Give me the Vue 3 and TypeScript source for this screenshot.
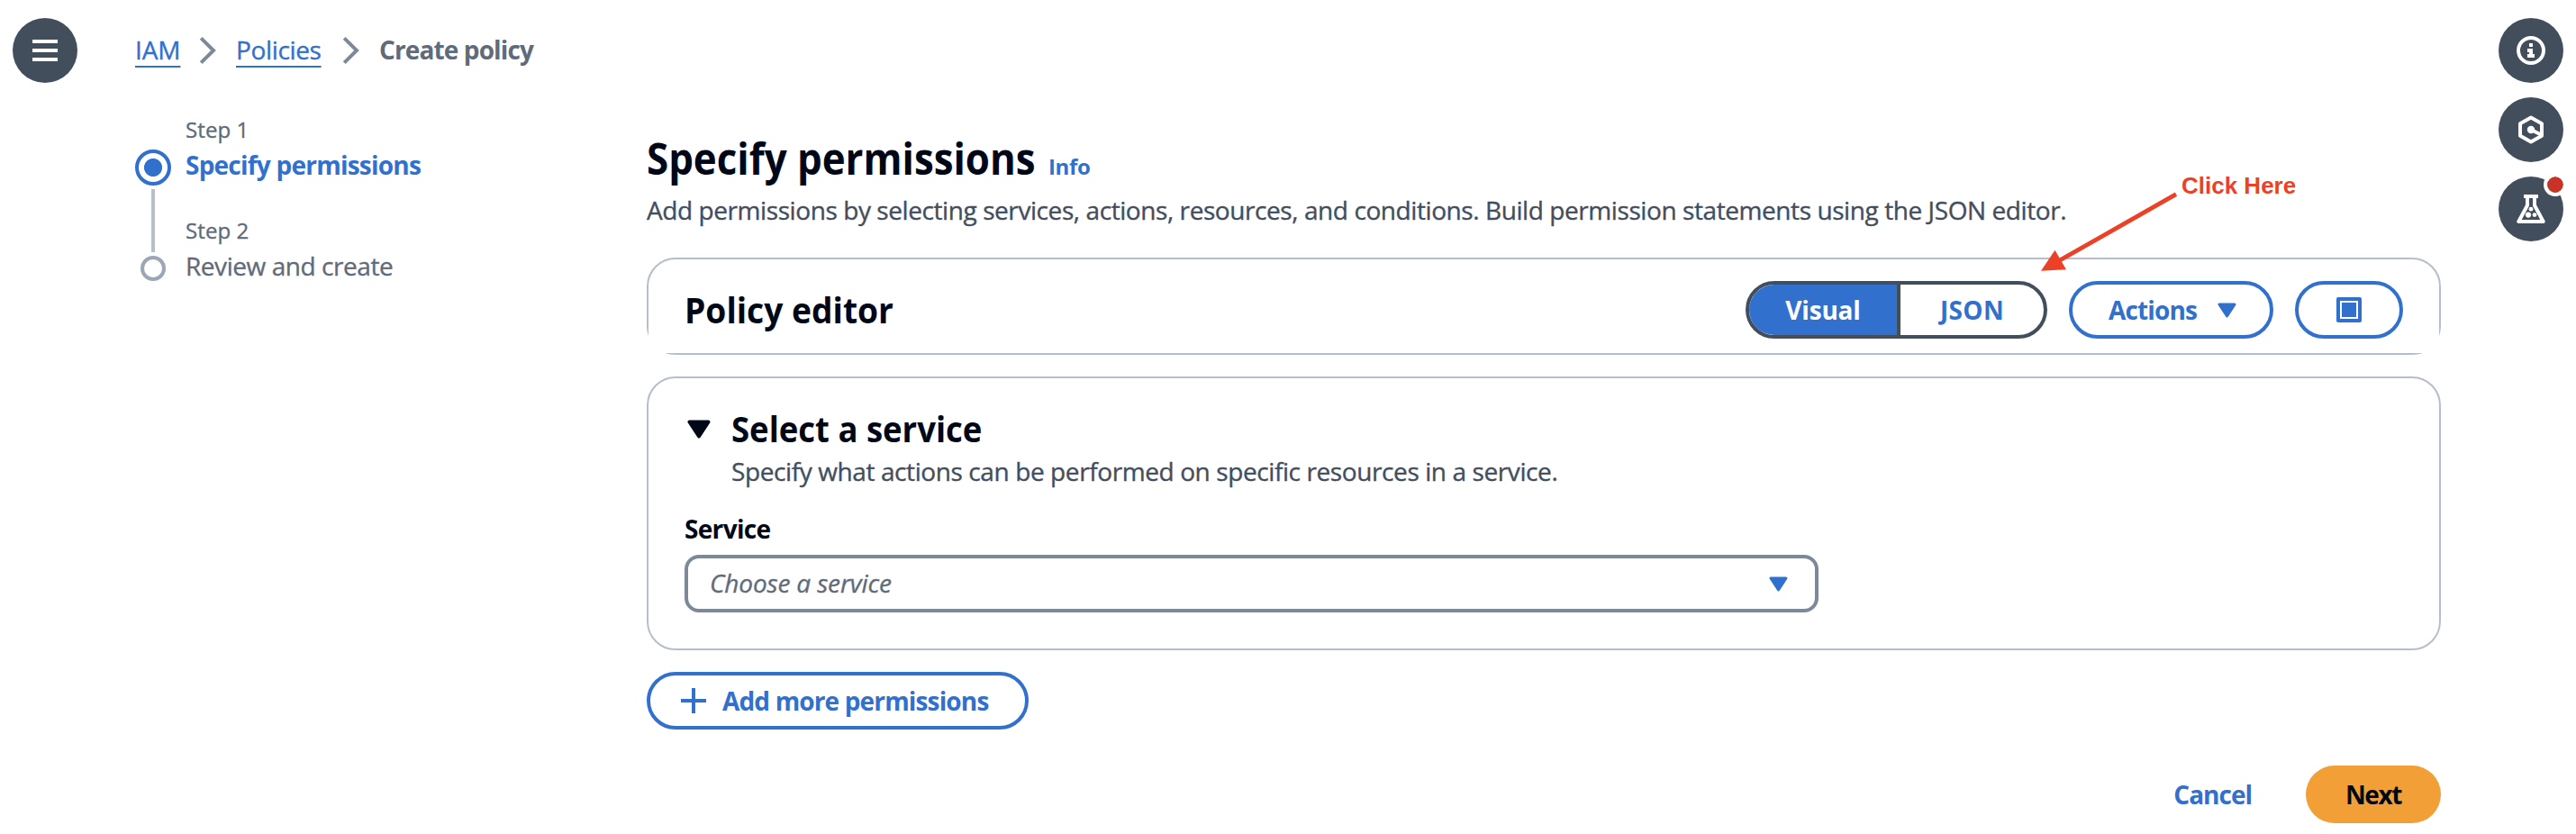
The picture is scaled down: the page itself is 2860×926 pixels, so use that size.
<script setup lang="ts">
import { ref } from 'vue'

type Mode = 'Visual' | 'JSON'

const crumbs: string[] = ['IAM', 'Policies']
const modes: Mode[] = ['Visual', 'JSON']
const mode = ref<Mode>('Visual')
</script>

<template>
  <div class="page">
    <div class="menu-column">
      <button class="round" aria-label="Open navigation">
        <svg viewBox="0 0 72 72">
          <path d="M22 26H50M22 36H50M22 46H50" />
        </svg>
      </button>
    </div>

    <aside class="side">
      <nav class="crumbs">
        <template v-for="crumb in crumbs" :key="crumb">
          <a class="crumb" :class="crumb.toLowerCase()">{{ crumb }}</a>
          <svg class="chevron" viewBox="0 0 19 30"><path d="M2.2 1.4L16 15L2.2 28.6" /></svg>
        </template>
        <span class="current">Create policy</span>
      </nav>

      <div class="steps">
        <span class="step-no first">Step 1</span>
        <span class="marker active"></span>
        <span class="step-name selected">Specify permissions</span>
        <span class="rail"></span>
        <span class="step-no second">Step 2</span>
        <span class="marker"></span>
        <span class="step-name upcoming">Review and create</span>
      </div>
    </aside>

    <main class="main">
      <header class="title-row">
        <h1><span>Specify permissions</span></h1>
        <a class="info">Info</a>
      </header>
      <p class="lead">Add permissions by selecting services, actions, resources, and conditions. Build permission statements using the JSON editor.</p>

      <section class="card editor">
        <h2 class="editor-title">Policy editor</h2>
        <div class="tools">
          <div class="segments">
            <button
              v-for="m in modes"
              :key="m"
              class="segment"
              :class="[m.toLowerCase(), { on: mode === m }]"
              @click="mode = m"
            >
              {{ m }}
            </button>
          </div>
          <button class="pill actions">
            <span>Actions</span>
            <svg class="caret" viewBox="0 0 21 17"><path d="M2 2H19L10.5 15Z" /></svg>
          </button>
          <button class="pill expand" aria-label="Full screen">
            <svg viewBox="0 0 28 28">
              <rect width="28" height="28" rx="2" fill="#3170cd" />
              <rect x="5" y="5" width="18" height="18" fill="none" stroke="#fff" stroke-width="2" />
            </svg>
          </button>
        </div>
      </section>

      <section class="card service">
        <div class="service-head">
          <svg class="toggle" viewBox="0 0 26 21"><path d="M2.5 2.5H23.5L13 18.5Z" /></svg>
          <h2 class="service-title">Select a service</h2>
        </div>
        <p class="service-text">Specify what actions can be performed on specific resources in a service.</p>
        <span class="label">Service</span>
        <div class="select">
          <span>Choose a service</span>
          <svg class="caret" viewBox="0 0 21 17"><path d="M2 2H19L10.5 15Z" /></svg>
        </div>
      </section>

      <button class="pill add">
        <svg viewBox="0 0 28 28"><path d="M14 0V28M0 14H28" /></svg>
        <span>Add more permissions</span>
      </button>

      <footer class="footer">
        <button class="cancel">Cancel</button>
        <button class="next">Next</button>
      </footer>
    </main>

    <div class="help-column">
      <button class="round" aria-label="Info">
        <svg viewBox="0 0 72 72">
          <circle cx="36" cy="36" r="14" />
          <path class="solid" d="M34 28h4v4h-4zM32 34h6v6h2v4h-8v-4h2v-2h-2z" />
        </svg>
      </button>
      <button class="round" aria-label="Resources">
        <svg viewBox="0 0 72 72">
          <path d="M36 22.6L48 29.2V42.8L36 49.6L24 42.8V29.2Z" />
          <path d="M36 36L47 41.5" />
          <circle class="solid" cx="36" cy="36" r="4.2" />
        </svg>
      </button>
      <button class="round" aria-label="Experiments">
        <svg viewBox="0 0 72 72">
          <path d="M28 22H44M32 22V32L22.3 50H49.7L40 32V22" />
          <circle class="solid" cx="36" cy="36.2" r="2.4" />
          <circle class="solid" cx="33" cy="42.6" r="3.1" />
          <circle class="solid" cx="40" cy="42.6" r="2.4" />
        </svg>
        <span class="dot"></span>
      </button>
    </div>

    <!-- Annotation floating over the editor -->
    <svg class="arrow" viewBox="0 0 156 90">
      <path class="shaft" d="M153 3.7L24 77" />
      <path class="head" d="M3 88.7L18.5 65.7L31 87.3Z" />
    </svg>
    <span class="note">Click Here</span>
  </div>
</template>

<style>
body {
  margin: 0;
  background: #fff;
}
</style>

<style scoped>
.page {
  position: relative;
  display: grid;
  grid-template-columns: 150px 568px 1992px 150px;
  width: 2860px;
  height: 926px;
  overflow: hidden;
  box-sizing: border-box;
  color: #000716;
  font: 400 28px/40px "Open Sans", "Noto Sans", sans-serif;
  white-space: nowrap;
}

.crumb,
.step-no,
.upcoming,
.lead,
.service-text,
.select span {
  -webkit-text-stroke: 0.35px currentColor;
}

button {
  box-sizing: border-box;
  margin: 0;
  padding: 0;
  border: 0;
  background: none;
  color: #3170cd;
  font: 700 28px/40px "Open Sans", "Noto Sans", sans-serif;
}

h1,
h2,
p {
  margin: 0;
}

svg {
  display: block;
  flex: none;
}

.menu-column {
  padding: 20px 0 0 14px;
}

.help-column {
  display: flex;
  flex-direction: column;
  gap: 16px;
  padding: 20px 0 0 64px;
}

.round {
  position: relative;
  width: 72px;
  height: 72px;
  border-radius: 50%;
  background: #434e5d;
}

.round svg {
  width: 72px;
  height: 72px;
  fill: none;
  stroke: #fff;
  stroke-width: 4;
  stroke-linejoin: round;
}

.round .solid {
  fill: #fff;
  stroke: none;
}

.dot {
  position: absolute;
  top: -4px;
  right: -4px;
  width: 18px;
  height: 18px;
  border: 4px solid #fff;
  border-radius: 50%;
  background: #c93226;
  background-clip: padding-box;
}

.crumbs {
  display: flex;
  align-items: flex-start;
  height: 40px;
  padding-top: 35px;
}

.crumb {
  color: #3170cd;
  text-decoration: underline;
  text-decoration-thickness: 2px;
  text-underline-offset: 7px;
  text-decoration-skip-ink: none;
}

.iam {
  width: 49px;
  letter-spacing: -0.1px;
}

.policies {
  width: 96px;
  letter-spacing: -0.35px;
}

.chevron {
  width: 19px;
  height: 30px;
  margin: 6px 22px 0;
  fill: none;
  stroke: #7d8998;
  stroke-width: 4;
}

.current {
  color: #5f6b7a;
  font-weight: 700;
  letter-spacing: -0.88px;
}

.steps {
  display: grid;
  grid-template-columns: 40px 1fr;
  grid-template-rows: 39px 40px 78px 40px;
  column-gap: 16px;
  margin-top: 52px;
  color: #5f6b7a;
  line-height: 34px;
}

.step-no {
  grid-column: 2;
  font-size: 24px;
  letter-spacing: 0.1px;
}

.second {
  align-self: end;
  margin-bottom: 11px;
}

.marker {
  box-sizing: border-box;
  width: 28px;
  height: 28px;
  margin-left: 6px;
  border: 4px solid #9ba7b6;
  border-radius: 50%;
}

.marker.active {
  width: 40px;
  height: 40px;
  margin-left: 0;
  border-color: #3170cd;
  background: radial-gradient(circle, #3170cd 9.6px, #fff 10.4px);
}

.selected {
  color: #3170cd;
  font-weight: 700;
  letter-spacing: -0.77px;
}

.upcoming {
  margin-top: -6px;
  letter-spacing: -0.44px;
}

.rail {
  width: 4px;
  margin: 4px 18px;
  background: #b6bec9;
}

.main {
  padding-top: 146px;
}

.title-row {
  display: flex;
  align-items: baseline;
}

h1 {
  width: 446px;
  font-size: 48px;
  line-height: 60px;
}

h1 span {
  display: inline-block;
  transform: scaleX(0.913);
  transform-origin: left;
}

.info {
  color: #3170cd;
  font-size: 24px;
  font-weight: 700;
  letter-spacing: -0.34px;
}

.lead {
  margin-top: 7px;
  color: #424e5e;
  letter-spacing: -0.42px;
}

.card {
  position: relative;
  box-sizing: border-box;
  border: 2px solid #b6bec9;
  border-radius: 32px;
  background: #fff;
}

.editor {
  display: flex;
  align-items: flex-start;
  justify-content: space-between;
  height: 108px;
  margin-top: 33px;
  padding: 24px 40px 0;
}

/* Square inner corners at the bottom cover the border's curve */
.editor::before,
.editor::after {
  content: "";
  position: absolute;
  bottom: 0;
  width: 32px;
  height: 32px;
  background: #fff;
}

.editor::before {
  left: 0;
}

.editor::after {
  right: 0;
}

h2 {
  font-size: 40px;
  line-height: 52px;
  transform-origin: left;
}

.editor-title {
  margin: 6px 0 0;
  transform: scaleX(0.93);
}

.tools {
  display: flex;
  gap: 24px;
}

.segments {
  display: flex;
  box-sizing: border-box;
  width: 335px;
  height: 64px;
  overflow: hidden;
  border: 4px solid #434e5d;
  border-radius: 32px;
}

.segment {
  width: 159px;
  padding-bottom: 1px;
}

.segment.visual {
  width: 168px;
  border-right: 4px solid #434e5d;
  letter-spacing: -0.19px;
}

.segment.json {
  letter-spacing: 0.34px;
}

.segment.on {
  background: #3170cd;
  color: #fff;
}

.pill {
  display: flex;
  align-items: center;
  height: 64px;
  border: 4px solid #3170cd;
  border-radius: 32px;
}

.pill span {
  padding-bottom: 1px;
  letter-spacing: -0.85px;
}

.caret {
  width: 21px;
  height: 17px;
  fill: #3170cd;
  stroke: #3170cd;
  stroke-width: 3;
  stroke-linejoin: round;
}

.actions {
  justify-content: space-between;
  width: 227px;
  padding: 0 37px 0 40px;
}

.expand {
  justify-content: center;
  width: 120px;
}

.expand svg {
  width: 28px;
  height: 28px;
}

.service {
  height: 304px;
  margin-top: 24px;
  padding: 30px 40px 0;
}

.service-head {
  display: flex;
  align-items: center;
}

.toggle {
  width: 26px;
  height: 21px;
  margin: 0 23px 0 3px;
  fill: #000716;
  stroke: #000716;
  stroke-width: 4;
  stroke-linejoin: round;
}

.service-title {
  transform: scaleX(0.912);
}

.service-text {
  margin: 1px 0 0 52px;
  color: #424e5e;
  letter-spacing: -0.4px;
}

.label {
  display: block;
  margin-top: 24px;
  font-weight: 700;
  letter-spacing: -0.67px;
}

.select {
  display: flex;
  align-items: center;
  justify-content: space-between;
  box-sizing: border-box;
  width: 1259px;
  height: 64px;
  margin-top: 9px;
  padding: 0 30px 0 24px;
  border: 4px solid #7d8998;
  border-radius: 16px;
  color: #5f6b7a;
  font-style: italic;
  letter-spacing: -0.15px;
}

.select span {
  padding-bottom: 2px;
}

.add {
  gap: 18px;
  width: 424px;
  margin-top: 24px;
  padding-left: 34px;
}

.add svg {
  width: 28px;
  height: 28px;
  stroke: #3170cd;
  stroke-width: 4;
}

.footer {
  display: flex;
  justify-content: flex-end;
  margin-top: 40px;
}

.cancel {
  margin-right: 60px;
  padding-bottom: 1px;
  letter-spacing: -1px;
}

.next {
  width: 150px;
  height: 64px;
  padding-bottom: 1px;
  border-radius: 32px;
  background: #f29f38;
  color: #000716;
  letter-spacing: -1.4px;
}

.arrow {
  position: absolute;
  left: 2263px;
  top: 212px;
  width: 156px;
  height: 90px;
}

.shaft {
  fill: none;
  stroke: #eb4127;
  stroke-width: 4.8;
}

.head {
  fill: #eb4127;
}

.note {
  position: absolute;
  left: 2422px;
  top: 191px;
  color: #eb4127;
  font: 700 26px/30px "Liberation Sans", Arial, sans-serif;
}
</style>
